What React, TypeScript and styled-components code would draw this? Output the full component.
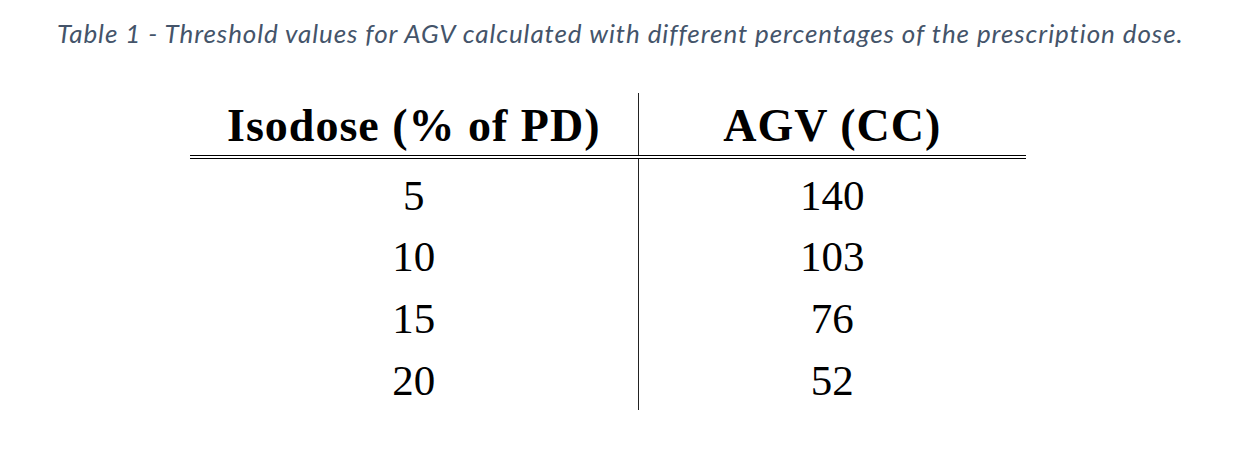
import styled, { createGlobalStyle } from "styled-components"

const GlobalStyle = createGlobalStyle`
  html, body {
    margin: 0;
    padding: 0;
    background: #ffffff;
  }
`

const rows = [
  { isodose: "5", agv: "140" },
  { isodose: "10", agv: "103" },
  { isodose: "15", agv: "76" },
  { isodose: "20", agv: "52" },
]

const App: React.FC = () => {
  return (
    <Page>
      <GlobalStyle />
      <Caption>Table 1 - Threshold values for AGV calculated with different percentages of the prescription dose.</Caption>

      <TableWrap>
        <Table>
          <colgroup>
            <col style={{ width: 448 }} />
            <col style={{ width: 388 }} />
          </colgroup>
          <thead>
            <tr>
              <HeadCell $divider>Isodose (% of PD)</HeadCell>
              <HeadCell>AGV (CC)</HeadCell>
            </tr>
          </thead>
          <tbody>
            {rows.map((row, i) => (
              <tr key={row.isodose}>
                <BodyCell $divider $first={i === 0}>{row.isodose}</BodyCell>
                <BodyCell $first={i === 0}>{row.agv}</BodyCell>
              </tr>
            ))}
          </tbody>
        </Table>
      </TableWrap>
    </Page>
  )
}

const Page = styled.div`
  width: 1234px;
  height: 454px;
  background: #ffffff;
  padding-top: 18px;
  box-sizing: border-box;
`

const Caption = styled.p`
  margin: 0 0 0 57px;
  font-family: Lato, "Open Sans", sans-serif;
  font-style: italic;
  font-size: 26px;
  line-height: 31px;
  letter-spacing: 0.92px;
  color: #44546a;
  white-space: nowrap;
`

const TableWrap = styled.div`
  padding-top: 44px;
  padding-left: 190px;
`

const Table = styled.table`
  border-collapse: collapse;
  table-layout: fixed;
  width: 836px;
  font-family: "Liberation Serif", "Times New Roman", serif;
  color: #000000;
`

const HeadCell = styled.th<{ $divider?: boolean }>`
  height: 60px;
  padding: 2px 0 0;
  font-size: 46px;
  font-weight: 700;
  letter-spacing: 1px;
  text-align: center;
  vertical-align: middle;
  border-bottom: 4px double #000000;
  border-right: ${(p) => (p.$divider ? "1px solid #222222" : "none")};
`

const BodyCell = styled.td<{ $divider?: boolean; $first?: boolean }>`
  height: ${(p) => (p.$first ? "67px" : "62px")};
  padding: ${(p) => (p.$first ? "7px 0 0" : "2px 0 0")};
  box-sizing: border-box;
  font-size: 43px;
  text-align: center;
  vertical-align: middle;
  border-right: ${(p) => (p.$divider ? "1px solid #222222" : "none")};
`

export default App
